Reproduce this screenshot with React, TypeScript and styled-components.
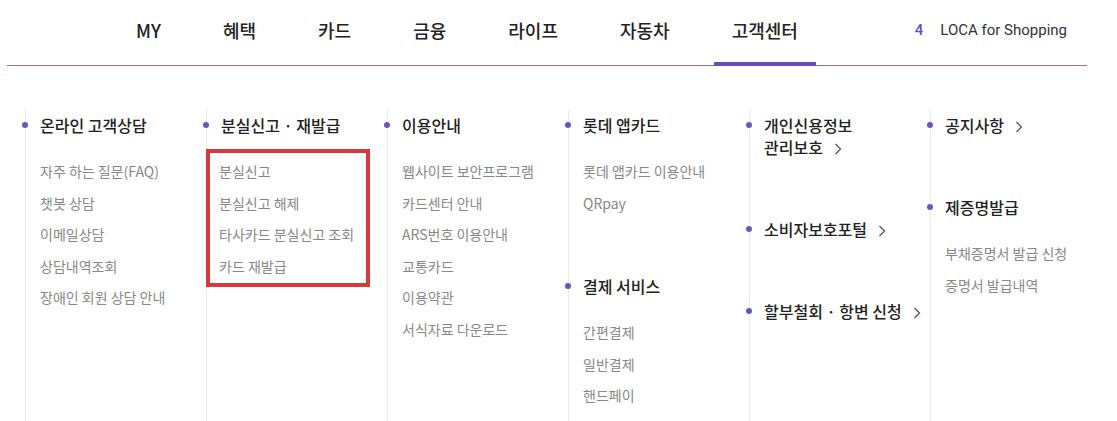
import React from 'react';
import styled, { createGlobalStyle, css } from 'styled-components';

const GlobalStyle = createGlobalStyle`
  * { box-sizing: border-box; }
  html, body { margin: 0; padding: 0; background: #fff; }
  body {
    font-family: "Noto Sans CJK KR", "Noto Sans", Roboto, sans-serif;
    color: #222;
  }
  ul { margin: 0; padding: 0; list-style: none; }
`;

const Page = styled.div`
  width: 1117px;
  height: 421px;
  padding-left: 7px;
  overflow: hidden;
`;

const Header = styled.header`
  width: 1080px;
  height: 66px;
  display: flex;
  align-items: stretch;
  border-bottom: 1px solid #8a70cc;
`;

const Nav = styled.nav`
  display: flex;
  gap: 26px;
  margin-left: 111px;
`;

const NavItem = styled.a<{ $active?: boolean }>`
  position: relative;
  display: flex;
  align-items: center;
  height: 65px;
  padding: 0 18px 5px;
  font-size: 18px;
  font-weight: 500;
  color: #222;
  text-decoration: none;
  white-space: nowrap;

  ${(p) => p.$active && css`
    &::after {
      content: '';
      position: absolute;
      left: 0;
      right: 0;
      bottom: -1px;
      height: 4px;
      background: #6a4db8;
    }
  `}
`;

const Shop = styled.div`
  margin-left: auto;
  margin-right: 20px;
  display: flex;
  align-items: center;
  padding-bottom: 5px;
  gap: 17px;
  font-family: Roboto, "Noto Sans", sans-serif;
  font-size: 15px;
  color: #333;
`;

const Count = styled.span`
  color: #6a4db8;
  font-weight: 500;
`;

const Columns = styled.div`
  display: grid;
  grid-template-columns: repeat(6, 181px);
  height: 297px;
  margin: 44px 0 0 18px;
`;

const Column = styled.div`
  border-left: 1px solid #ebebeb;
  padding: 4px 0 0 14px;
`;

const Group = styled.div`
  margin-bottom: 60px;
`;

const Heading = styled.div`
  position: relative;
  font-size: 16px;
  line-height: 22px;
  font-weight: 500;
  color: #222;
  white-space: nowrap;

  &::before {
    content: '';
    position: absolute;
    left: -18px;
    top: 8px;
    width: 6px;
    height: 6px;
    border-radius: 50%;
    background: #6f52c0;
  }
`;

const Chevron = styled.svg`
  display: inline-block;
  vertical-align: -1px;
  margin-left: 11px;
`;

const List = styled.ul`
  margin-top: 20px;
  margin-bottom: -4px;
`;

const Highlight = styled(List)`
  width: 164px;
  margin-top: 13px;
  margin-left: -15px;
  padding: 3px 0 1px 9px;
  border: 4px solid #d63b3a;
`;

const Item = styled.li`
  font-size: 14px;
  line-height: 31.5px;
  color: #888;
  white-space: nowrap;
`;

const Arrow = () => (
  <Chevron width="8" height="12" viewBox="0 0 8 12">
    <polyline points="1.5,1 6.5,6 1.5,11" fill="none" stroke="#555" strokeWidth="1.3" />
  </Chevron>
);

type GroupData = { title: React.ReactNode; arrow?: boolean; items?: string[]; boxed?: boolean };

const columns: GroupData[][] = [
  [{ title: '온라인 고객상담', items: ['자주 하는 질문(FAQ)', '챗봇 상담', '이메일상담', '상담내역조회', '장애인 회원 상담 안내'] }],
  [{ title: '분실신고 · 재발급', boxed: true, items: ['분실신고', '분실신고 해제', '타사카드 분실신고 조회', '카드 재발급'] }],
  [{ title: '이용안내', items: ['웹사이트 보안프로그램', '카드센터 안내', 'ARS번호 이용안내', '교통카드', '이용약관', '서식자료 다운로드'] }],
  [
    { title: '롯데 앱카드', items: ['롯데 앱카드 이용안내', 'QRpay'] },
    { title: '결제 서비스', items: ['간편결제', '일반결제', '핸드페이'] },
  ],
  [
    { title: <>개인신용정보<br />관리보호</>, arrow: true },
    { title: '소비자보호포털', arrow: true },
    { title: '할부철회 · 항변 신청', arrow: true },
  ],
  [
    { title: '공지사항', arrow: true },
    { title: '제증명발급', items: ['부채증명서 발급 신청', '증명서 발급내역'] },
  ],
];

const navs = ['MY', '혜택', '카드', '금융', '라이프', '자동차', '고객센터'];

export default function App() {
  return (
    <>
      <GlobalStyle />
      <Page>
        <Header>
          <Nav>
            {navs.map((n) => (
              <NavItem key={n} $active={n === '고객센터'}>
                {n}
              </NavItem>
            ))}
          </Nav>
          <Shop>
            <Count>4</Count>
            <span>LOCA for Shopping</span>
          </Shop>
        </Header>
        <Columns>
          {columns.map((groups, ci) => (
            <Column key={ci}>
              {groups.map((g, gi) => {
                const ListComp = g.boxed ? Highlight : List;
                return (
                  <Group key={gi}>
                    <Heading>
                      {g.title}
                      {g.arrow && <Arrow />}
                    </Heading>
                    {g.items && (
                      <ListComp>
                        {g.items.map((it) => (
                          <Item key={it}>{it}</Item>
                        ))}
                      </ListComp>
                    )}
                  </Group>
                );
              })}
            </Column>
          ))}
        </Columns>
      </Page>
    </>
  );
}
